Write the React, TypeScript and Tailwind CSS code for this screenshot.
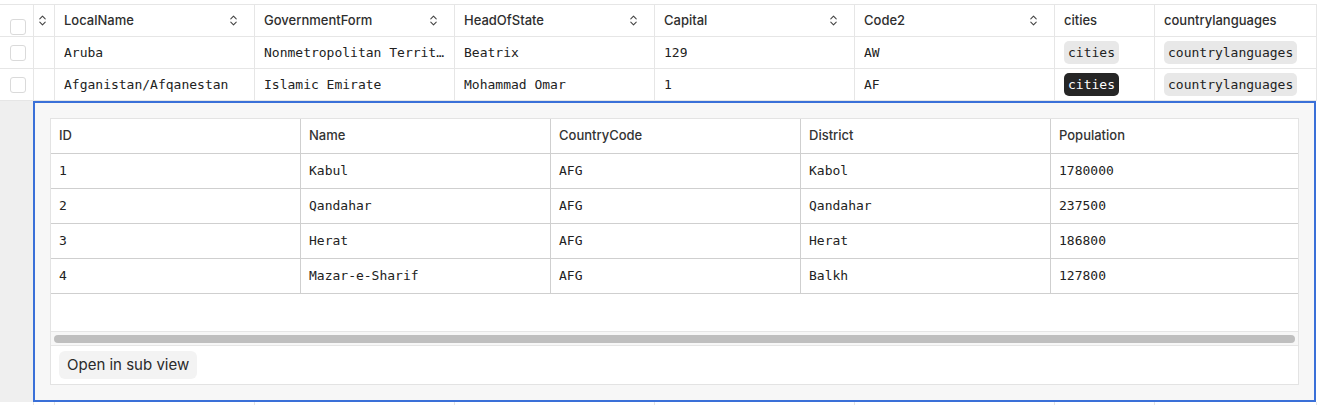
import React from 'react';
import { ChevronsUpDown } from 'lucide-react';

const SANS = "font-['Inter','Liberation_Sans',sans-serif]";
const MONO = "font-['DejaVu_Sans_Mono','Liberation_Mono',monospace]";

type Country = {
  localName: string;
  governmentForm: string;
  headOfState: string;
  capital: string;
  code2: string;
  citiesOpen?: boolean;
};

const COUNTRIES: Country[] = [
  { localName: 'Aruba', governmentForm: 'Nonmetropolitan Territory of The Netherlands', headOfState: 'Beatrix', capital: '129', code2: 'AW' },
  { localName: 'Afganistan/Afqanestan', governmentForm: 'Islamic Emirate', headOfState: 'Mohammad Omar', capital: '1', code2: 'AF', citiesOpen: true },
];

const CITIES = [
  { id: '1', name: 'Kabul', code: 'AFG', district: 'Kabol', population: '1780000' },
  { id: '2', name: 'Qandahar', code: 'AFG', district: 'Qandahar', population: '237500' },
  { id: '3', name: 'Herat', code: 'AFG', district: 'Herat', population: '186800' },
  { id: '4', name: 'Mazar-e-Sharif', code: 'AFG', district: 'Balkh', population: '127800' },
];

const SORTED_COLUMNS = ['LocalName', 'GovernmentForm', 'HeadOfState', 'Capital', 'Code2'];

const Checkbox: React.FC = () => (
  <span className="block w-[16px] h-[16px] rounded-[3px] border border-[#dadada] bg-white" />
);

const SortIcon: React.FC = () => (
  <ChevronsUpDown size={13} strokeWidth={2} className="text-[#444] shrink-0" />
);

const Chip: React.FC<{ label: string; dark?: boolean }> = ({ label, dark }) => (
  <span
    className={
      dark
        ? `${MONO} text-[13px] leading-[23px] px-[4px] rounded-[5px] bg-[#262626] text-white font-medium`
        : `${MONO} text-[13px] leading-[23px] px-[4px] rounded-[5px] bg-[#e8e8e8] text-[#222]`
    }
  >
    {label}
  </span>
);

const HeaderRow: React.FC = () => (
  <div className={`flex h-[32px] border-b border-[#e6e6e6] ${SANS} text-[13px] font-medium text-[#2e2e2e]`}>
    <div className="w-[34px] shrink-0 border-r border-[#e6e6e6] pl-[10px] pt-[14px]">
      <Checkbox />
    </div>
    <div className="w-[21px] shrink-0 border-r border-[#e6e6e6] pl-[2px] flex items-center">
      <SortIcon />
    </div>
    {SORTED_COLUMNS.map(col => (
      <div key={col} className="w-[200px] shrink-0 border-r border-[#e6e6e6] pl-[9px] pr-[14px] flex items-center justify-between">
        <span>{col}</span>
        <SortIcon />
      </div>
    ))}
    <div className="w-[100px] shrink-0 border-r border-[#e6e6e6] pl-[9px] flex items-center">cities</div>
    <div className="w-[162px] shrink-0 border-r border-[#e6e6e6] pl-[9px] flex items-center">countrylanguages</div>
  </div>
);

const DataRow: React.FC<{ row: Country }> = ({ row }) => (
  <div className={`flex h-[32px] border-b border-[#e6e6e6] ${MONO} text-[13px] text-[#222]`}>
    <div className="w-[34px] shrink-0 border-r border-[#e6e6e6] pl-[10px] flex items-center">
      <Checkbox />
    </div>
    <div className="w-[21px] shrink-0 border-r border-[#e6e6e6]" />
    {[row.localName, row.governmentForm, row.headOfState, row.capital, row.code2].map((v, i) => (
      <div key={i} className="w-[200px] shrink-0 border-r border-[#e6e6e6] px-[9px] flex items-center min-w-0">
        <span className="truncate">{v}</span>
      </div>
    ))}
    <div className="w-[100px] shrink-0 border-r border-[#e6e6e6] pl-[9px] flex items-center">
      <Chip label="cities" dark={row.citiesOpen} />
    </div>
    <div className="w-[162px] shrink-0 border-r border-[#e6e6e6] pl-[9px] flex items-center">
      <Chip label="countrylanguages" />
    </div>
  </div>
);

const CitiesPanel: React.FC = () => {
  const cols = ['ID', 'Name', 'CountryCode', 'District', 'Population'];
  return (
    <div className="bg-white border border-[#e3e3e3]">
      <div className={`grid grid-cols-[250px_250px_250px_250px_1fr] h-[35px] border-b border-[#cfcfcf] ${SANS} text-[13px] font-medium text-[#333]`}>
        {cols.map((c, i) => (
          <div key={c} className={`pl-[8px] flex items-center ${i < 4 ? 'border-r border-[#cfcfcf]' : ''}`}>{c}</div>
        ))}
      </div>
      {CITIES.map(city => (
        <div key={city.id} className={`grid grid-cols-[250px_250px_250px_250px_1fr] h-[35px] border-b border-[#cfcfcf] ${MONO} text-[13px] text-[#222]`}>
          {[city.id, city.name, city.code, city.district, city.population].map((v, i) => (
            <div key={i} className={`pl-[8px] flex items-center ${i < 4 ? 'border-r border-[#cfcfcf]' : ''}`}>{v}</div>
          ))}
        </div>
      ))}
      <div className="h-[37px]" />
      <div className="h-[15px] border-y border-[#e6e6e6] bg-[#f7f7f7] px-[3px] flex items-center">
        <div className="h-[8px] w-full rounded-full bg-[#bfbfbf]" />
      </div>
      <div className="pl-[8px] pt-[5px] pb-[5px]">
        <button className={`h-[28px] px-[8px] rounded-[6px] bg-[#f3f3f3] ${SANS} text-[15px] text-[#2a2a2a]`}>
          Open in sub view
        </button>
      </div>
    </div>
  );
};

const ExpansionRow: React.FC = () => (
  <div className="flex">
    <div className="w-[33px] shrink-0 bg-[#efefef]" />
    <div className="w-[1283px] shrink-0 border-2 border-[#3a70d8] bg-[#f7f7f7] p-[15px]">
      <CitiesPanel />
    </div>
  </div>
);

const EmptyRow: React.FC = () => (
  <div className="flex h-[32px]">
    <div className="w-[34px] shrink-0 border-r border-[#e6e6e6]" />
    <div className="w-[21px] shrink-0 border-r border-[#e6e6e6]" />
    {SORTED_COLUMNS.map(col => (
      <div key={col} className="w-[200px] shrink-0 border-r border-[#e6e6e6]" />
    ))}
    <div className="w-[100px] shrink-0 border-r border-[#e6e6e6]" />
    <div className="w-[162px] shrink-0 border-r border-[#e6e6e6]" />
  </div>
);

export default function App() {
  return (
    <div className="w-[1320px] h-[405px] overflow-hidden bg-white pt-[4px]">
      <div className="w-[1317px] border-t border-[#e6e6e6]">
        <HeaderRow />
        {COUNTRIES.map(c => (
          <DataRow key={c.code2} row={c} />
        ))}
        <ExpansionRow />
        <EmptyRow />
      </div>
    </div>
  );
}
